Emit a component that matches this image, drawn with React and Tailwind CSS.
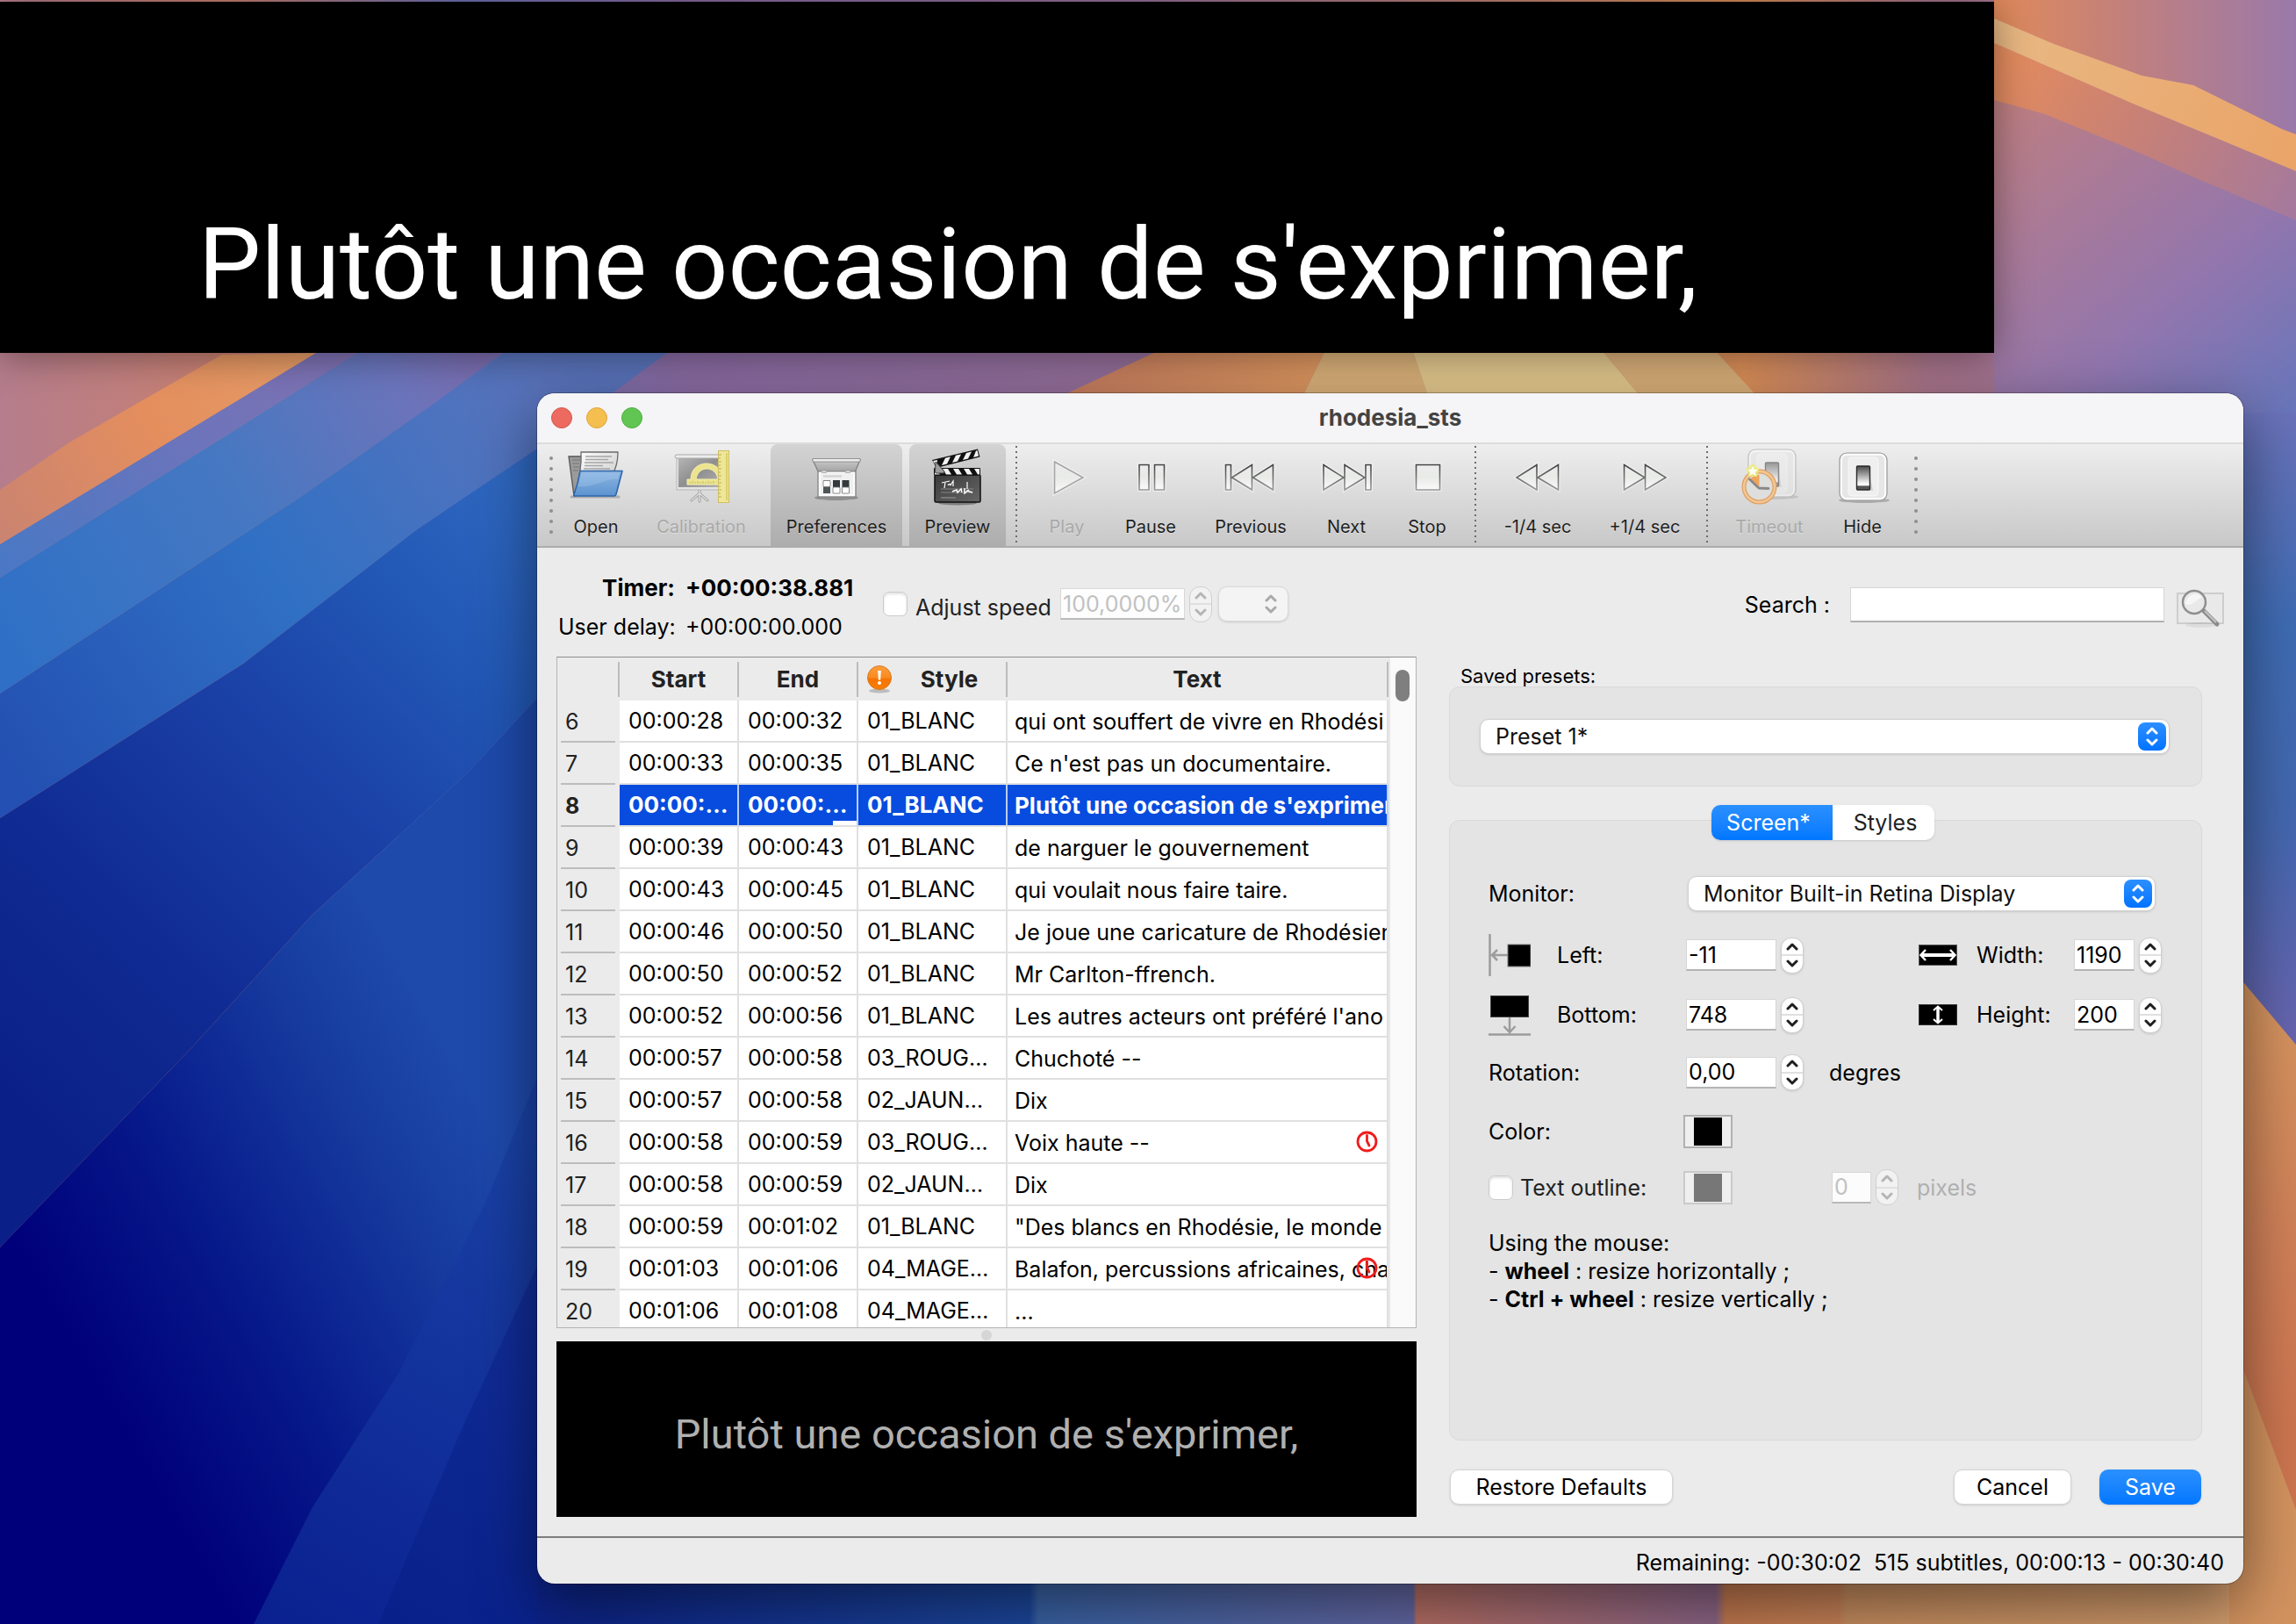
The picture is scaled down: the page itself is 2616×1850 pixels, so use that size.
import React from "react";

/* ---------- Desktop wallpaper ---------- */

function Wallpaper() {
  return (
    <svg
      className="absolute inset-0 h-full w-full"
      viewBox="0 0 2616 1850"
      preserveAspectRatio="none"
      aria-hidden="true"
    >
      <defs>
        <linearGradient id="wTop" x1="0" y1="0" x2="2616" y2="0" gradientUnits="userSpaceOnUse">
          <stop offset="0" stopColor="#b57d8c" />
          <stop offset="0.1" stopColor="#c98070" />
          <stop offset="0.2" stopColor="#6f72b6" />
          <stop offset="0.3" stopColor="#8b6ca4" />
          <stop offset="0.5" stopColor="#96709a" />
          <stop offset="0.76" stopColor="#dd9058" />
          <stop offset="0.84" stopColor="#a9758c" />
          <stop offset="1" stopColor="#9572ac" />
        </linearGradient>
        <linearGradient id="wGap" x1="1207" y1="0" x2="1510" y2="0" gradientUnits="userSpaceOnUse">
          <stop offset="0" stopColor="#c67c60" />
          <stop offset="1" stopColor="#df9860" />
        </linearGradient>
        <linearGradient id="wUpperRight" x1="2272" y1="60" x2="2616" y2="480" gradientUnits="userSpaceOnUse">
          <stop offset="0" stopColor="#c58078" />
          <stop offset="0.35" stopColor="#a97a98" />
          <stop offset="0.65" stopColor="#9176ae" />
          <stop offset="1" stopColor="#6676bc" />
        </linearGradient>
        <linearGradient id="wSkyRight" x1="2272" y1="0" x2="2616" y2="0" gradientUnits="userSpaceOnUse">
          <stop offset="0" stopColor="#e08a5a" />
          <stop offset="0.5" stopColor="#bd7f82" />
          <stop offset="1" stopColor="#9a79aa" />
        </linearGradient>
        <linearGradient id="wBeam" x1="2272" y1="20" x2="2616" y2="190" gradientUnits="userSpaceOnUse">
          <stop offset="0" stopColor="#e8b884" />
          <stop offset="1" stopColor="#eaa468" />
        </linearGradient>
        <linearGradient id="wBeam2" x1="2272" y1="60" x2="2616" y2="250" gradientUnits="userSpaceOnUse">
          <stop offset="0" stopColor="#e58c5c" />
          <stop offset="0.5" stopColor="#c58078" />
          <stop offset="1" stopColor="#a4799e" />
        </linearGradient>
        <linearGradient id="wOrange" x1="0" y1="600" x2="360" y2="400" gradientUnits="userSpaceOnUse">
          <stop offset="0" stopColor="#cb8470" />
          <stop offset="0.5" stopColor="#e48e5e" />
          <stop offset="1" stopColor="#e59c66" />
        </linearGradient>
        <linearGradient id="wViolet" x1="0" y1="640" x2="400" y2="400" gradientUnits="userSpaceOnUse">
          <stop offset="0" stopColor="#4a78c4" />
          <stop offset="0.6" stopColor="#6f74ba" />
          <stop offset="1" stopColor="#8070b0" />
        </linearGradient>
        <linearGradient id="wSky" x1="0" y1="720" x2="540" y2="400" gradientUnits="userSpaceOnUse">
          <stop offset="0" stopColor="#2f70c6" />
          <stop offset="0.5" stopColor="#4678c2" />
          <stop offset="0.85" stopColor="#6b74ba" />
          <stop offset="1" stopColor="#7a6cae" />
        </linearGradient>
        <linearGradient id="wBlue" x1="0" y1="860" x2="612" y2="440" gradientUnits="userSpaceOnUse">
          <stop offset="0" stopColor="#2350b2" />
          <stop offset="0.5" stopColor="#3070c4" />
          <stop offset="1" stopColor="#5a74bc" />
        </linearGradient>
        <linearGradient id="wDeep" x1="0" y1="1250" x2="640" y2="600" gradientUnits="userSpaceOnUse">
          <stop offset="0" stopColor="#0a2088" />
          <stop offset="0.25" stopColor="#0f2a92" />
          <stop offset="0.55" stopColor="#1a40a6" />
          <stop offset="0.8" stopColor="#2258b6" />
          <stop offset="1" stopColor="#2f68c0" />
        </linearGradient>
        <linearGradient id="wNavy" x1="120" y1="1600" x2="590" y2="1330" gradientUnits="userSpaceOnUse">
          <stop offset="0" stopColor="#00007a" />
          <stop offset="0.35" stopColor="#06188a" />
          <stop offset="0.75" stopColor="#163a9e" />
          <stop offset="1" stopColor="#1e4aac" />
        </linearGradient>
        <linearGradient id="wNavy2" x1="300" y1="1850" x2="612" y2="1300" gradientUnits="userSpaceOnUse">
          <stop offset="0" stopColor="#0a2090" />
          <stop offset="1" stopColor="#1a42a6" />
        </linearGradient>
        <linearGradient id="wNavy3" x1="430" y1="1850" x2="640" y2="1450" gradientUnits="userSpaceOnUse">
          <stop offset="0" stopColor="#08208a" />
          <stop offset="1" stopColor="#122e98" />
        </linearGradient>
        <linearGradient id="wBottom" x1="612" y1="0" x2="2616" y2="0" gradientUnits="userSpaceOnUse">
          <stop offset="0" stopColor="#0c2288" />
          <stop offset="0.28" stopColor="#1d489e" />
          <stop offset="0.285" stopColor="#3a64a8" />
          <stop offset="0.498" stopColor="#6468a4" />
          <stop offset="0.5" stopColor="#b87066" />
          <stop offset="0.67" stopColor="#8d6688" />
          <stop offset="0.676" stopColor="#c67b50" />
          <stop offset="0.74" stopColor="#c98358" />
          <stop offset="0.745" stopColor="#c98f60" />
          <stop offset="1" stopColor="#d6a070" />
        </linearGradient>
        <linearGradient id="wRight" x1="0" y1="448" x2="0" y2="1200" gradientUnits="userSpaceOnUse">
          <stop offset="0" stopColor="#6e73ba" />
          <stop offset="0.35" stopColor="#3f6cb4" />
          <stop offset="0.65" stopColor="#4468b0" />
          <stop offset="1" stopColor="#6a64ae" />
        </linearGradient>
        <linearGradient id="wRightLow" x1="0" y1="1120" x2="0" y2="1620" gradientUnits="userSpaceOnUse">
          <stop offset="0" stopColor="#d69660" />
          <stop offset="0.6" stopColor="#d08058" />
          <stop offset="1" stopColor="#cd7650" />
        </linearGradient>
      </defs>
      <rect width="2616" height="1850" fill="url(#wTop)" />
      <path d="M1330 395H1512L1480 460H1190Z" fill="url(#wGap)" />
      <path d="M1512 395H1608L1630 460H1480Z" fill="#dcb27a" />
      <path d="M1608 395H1822L1876 460H1630Z" fill="#e4c98e" />
      <path d="M1822 395H1950L2010 460H1876Z" fill="#dbb07a" />
      <path d="M0 620 360 402 407 402 0 658Z" fill="url(#wViolet)" />
      <path d="M0 558 79 504 253 404 360 402 0 620Z" fill="url(#wOrange)" />
      <path d="M0 658 407 402 573 402 494 460 344 565 0 790Z" fill="url(#wSky)" />
      <path d="M0 790 344 565 494 460 573 402H760L612 511 474 604 277 756 0 932Z" fill="url(#wBlue)" />
      <path d="M0 932 277 756 474 604 612 511H700V760L612 795 534 879 356 1042 217 1195 0 1421Z" fill="url(#wDeep)" />
      <path d="M0 1421 217 1195 356 1042 534 879 612 795H700V1850H0Z" fill="url(#wNavy)" />
      <path d="M660 1180 612 1228 554 1368 455 1563 356 1717 289 1850H660Z" fill="url(#wNavy2)" />
      <path d="M660 1400 612 1442 526 1628 431 1850H660Z" fill="url(#wNavy3)" />
      <rect x="612" y="1700" width="2004" height="150" fill="url(#wBottom)" />
      <path d="M2272 0H2616V480H2272Z" fill="url(#wUpperRight)" />
      <path d="M2272 0H2616V153L2499 97 2440 86 2340 50 2272 21Z" fill="url(#wSkyRight)" />
      <path d="M2272 49 2430 118 2616 195V251L2502 203 2440 175 2330 130 2272 114Z" fill="url(#wBeam2)" />
      <path d="M2272 21 2340 50 2440 86 2499 97 2600 147 2616 153V195L2430 118 2272 49Z" fill="url(#wBeam)" />
      <rect x="2500" y="470" width="116" height="740" fill="url(#wRight)" />
      <path d="M2540 1100 2616 1190V1850H2540Z" fill="url(#wRightLow)" />
      <path d="M2556 1560 2616 1720V1850H2540V1560Z" fill="#d3935f" />
    </svg>
  );
}

/* ---------- Toolbar icons ---------- */

function Icon({ children }) {
  return (
    <svg className="h-16 w-16 shrink-0 overflow-visible" viewBox="0 0 64 64" aria-hidden="true">
      <defs>
        <linearGradient id="glass" x1="0" y1="0" x2="0" y2="1">
          <stop offset="0" stopColor="#ececec" />
          <stop offset="0.5" stopColor="#e9ebe8" />
          <stop offset="1" stopColor="#fafafa" />
        </linearGradient>
        <linearGradient id="edge" x1="0" y1="0" x2="0" y2="1">
          <stop offset="0" stopColor="#444" />
          <stop offset="1" stopColor="#999" />
        </linearGradient>
        <linearGradient id="rocker" x1="0" y1="0" x2="0" y2="1">
          <stop offset="0" stopColor="#4a4a4a" />
          <stop offset="0.7" stopColor="#f2f2f2" />
          <stop offset="0.82" stopColor="#fff" />
          <stop offset="0.84" stopColor="#555" />
        </linearGradient>
      </defs>
      {children}
    </svg>
  );
}

const OpenIcon = () => (
  <Icon>
    <defs>
      <linearGradient id="folderBlue" x1="0" y1="0" x2="0" y2="1">
        <stop offset="0" stopColor="#8db6e2" />
        <stop offset="1" stopColor="#5c93cf" />
      </linearGradient>
      <linearGradient id="paper" x1="0" y1="0" x2="1" y2="1">
        <stop offset="0" stopColor="#fff" />
        <stop offset="1" stopColor="#c4c4c4" />
      </linearGradient>
    </defs>
    <path d="M4 58H58" stroke="#00000033" strokeWidth="3" strokeLinecap="round" />
    <path d="M1 12H18L12 56 7 57Z" fill="#9a9a9a" stroke="#555" strokeWidth="1.3" />
    <path d="M5 16H14M5 20H13M6 24H13M6 28H12" stroke="#777" />
    <path d="M15 7H57C57 17 55 26 50 34L8 55C13 38 16 24 15 7Z" fill="url(#paper)" stroke="#6b6b6b" strokeWidth="1.3" />
    <path d="M20 12H50M20 15.500H46M19 19H52M19 22.500H40M18 26H48" stroke="#a5a5a5" strokeWidth="1.4" />
    <path d="M14 28.500H62L55 55Q54.500 57 52.500 57H8Q6.500 57 7 55Q12 42 14 28.500Z" fill="url(#folderBlue)" stroke="#2f65ad" strokeWidth="1.6" strokeLinejoin="round" />
    <path d="M16 30.500H59L57 38C40 37 30 48 11 46Z" fill="#a9caee" opacity="0.35" />
  </Icon>
);

const CalibrationIcon = () => (
  <Icon>
    <defs>
      <linearGradient id="board" x1="0" y1="0" x2="1" y2="1">
        <stop offset="0" stopColor="#b4b4b4" />
        <stop offset="0.5" stopColor="#8f8f8f" />
        <stop offset="1" stopColor="#b0b0b0" />
      </linearGradient>
    </defs>
    <path d="M30 50V57M30 54 21 62M30 54 39 62M30 54V63" stroke="#999" strokeWidth="3" strokeLinecap="round" />
    <path d="M30 50V57M30 54 21 62M30 54 39 62M30 54V63" stroke="#dedede" strokeWidth="1.500" strokeLinecap="round" />
    <rect x="4" y="12" width="50" height="38" fill="#e4e4e4" stroke="#b5b5b5" />
    <rect x="6" y="14" width="46" height="33" fill="url(#board)" />
    <rect x="2" y="10" width="52" height="4" rx="2" fill="#ededed" stroke="#a9a9a9" />
    <path d="M16 44V38H20C20 14 56 14 56 38V44ZM26 38H51C49 22 28 22 26 38Z" fill="#ece38e" stroke="#f4efb0" strokeWidth="1" fillRule="evenodd" />
    <path d="M19 43V41M22 43V40M25 43V41M28 43V40M31 43V41M34 43V40M37 43V41M40 43V40M43 43V41M46 43V40" stroke="#b9ae58" strokeWidth="0.800" />
    <rect x="51.500" y="5.500" width="12" height="59" fill="#efe696" stroke="#cdbf66" />
    <path d="M61 8V62" stroke="#dccf70" strokeWidth="2" />
    <path d="M52 10H55M52 14H54M52 18H55M52 22H54M52 26H55M52 30H54M52 34H55M52 38H54M52 42H55M52 46H54M52 50H55M52 54H54M52 58H55" stroke="#b9ae58" />
  </Icon>
);

const PreferencesIcon = () => (
  <Icon>
    <defs>
      <linearGradient id="lid" x1="0" y1="0" x2="0" y2="1">
        <stop offset="0" stopColor="#c9c9c9" />
        <stop offset="1" stopColor="#a4a4a4" />
      </linearGradient>
    </defs>
    <ellipse cx="32" cy="59" rx="25" ry="3" fill="#00000040" />
    <rect x="11" y="28" width="43" height="30" fill="#f0f0f0" stroke="#858585" strokeWidth="1.300" />
    <rect x="13" y="30" width="39" height="26" fill="none" stroke="#fff" strokeWidth="1.400" />
    <path d="M5 15.500H59L53.500 29H11Z" fill="url(#lid)" stroke="#7d7d7d" strokeWidth="1.200" />
    <path d="M5 16.500H59" stroke="#ededed" strokeWidth="3" />
    <path d="M5 14.500H59V18H5Z" fill="none" stroke="#8a8a8a" strokeWidth="0.900" />
    <rect x="15" y="28" width="6" height="2.500" rx="1" fill="#ddd" stroke="#888" strokeWidth="0.600" />
    <rect x="42" y="28" width="6" height="2.500" rx="1" fill="#ddd" stroke="#888" strokeWidth="0.600" />
    <path d="M17 34.500H38" stroke="#cfcfcf" strokeWidth="2" />
    <rect x="17" y="39" width="8" height="15" fill="#4d5557" />
    <rect x="28" y="39" width="8" height="15" fill="#333a3c" />
    <rect x="38.500" y="39" width="8" height="15" fill="#333a3c" />
    <rect x="17" y="39.500" width="8" height="7" rx="1" fill="#fff" stroke="#777" strokeWidth="0.800" />
    <rect x="28" y="47" width="8" height="7" rx="1" fill="#fff" stroke="#777" strokeWidth="0.800" />
    <rect x="38.500" y="47" width="8" height="7" rx="1" fill="#fff" stroke="#777" strokeWidth="0.800" />
  </Icon>
);

const PreviewIcon = () => (
  <Icon>
    <defs>
      <linearGradient id="slate" x1="0" y1="0" x2="1" y2="1">
        <stop offset="0" stopColor="#3a3a3a" />
        <stop offset="1" stopColor="#666" />
      </linearGradient>
    </defs>
    <ellipse cx="32" cy="65" rx="22" ry="2.500" fill="#00000055" />
    <rect x="6" y="33" width="52" height="31" rx="1.500" fill="url(#slate)" stroke="#111" strokeWidth="1.500" />
    <rect x="5" y="25" width="53" height="8.500" rx="1" fill="#111" />
    <path d="M15 26H21L25 32.500H19ZM27 26H33L37 32.500H31ZM39 26H45L49 32.500H43ZM51 26H57V32.500H55ZM6 27 12 32.500H6Z" fill="#f2f2f2" />
    <path d="M3 16 55 3.500 57.500 12.500 8 25Z" fill="#111" />
    <path d="M4 17 9 16 8 23ZM18 13.700 24 12.300 20 20.500 14 22ZM30 10.800 36 9.400 32 17.500 26 19ZM42 8 48 6.500 44 14.500 38 16ZM53 5.500 54.500 5 56 11.500 50 13Z" fill="#f2f2f2" />
    <path d="M7 18 17 29Q18 31 15 31H8Q6 31 6.500 29Z" fill="#9c9c9c" stroke="#444" />
    <path d="M13 49H50M13 53H50" stroke="#8a8a8a" strokeWidth="0.900" />
    <path d="M13 59H30" stroke="#777" strokeWidth="2" />
    <path d="M14 42 23 40M18 41 17 48M21 45C24 40 23 48 25 43L27 40 27 46M43 41V49" stroke="#fff" strokeWidth="1.200" fill="none" />
    <path d="M26 52 31 50 32 53 36 49 37 53M40 48V54L45 50M42 51 49 53" stroke="#fff" strokeWidth="1.500" fill="none" />
  </Icon>
);

const Media = ({ d, faded }) => (
  <Icon>
    <path d={d} fill="none" stroke="#ffffff" strokeOpacity="0.500" strokeWidth="4" />
    <path
      d={d}
      fill="url(#glass)"
      stroke={faded ? "#a5a5a5" : "url(#edge)"}
      strokeWidth="1.600"
      strokeLinejoin="miter"
    />
  </Icon>
);

const Plate = ({ x, y }) => (
  <>
    <ellipse cx={x + 28} cy={y + 54} rx="29" ry="3" fill="#00000033" />
    <rect x={x} y={y} width="54" height="54" rx="8" fill="#f0f0f0" stroke="#9a9a9a" strokeWidth="1.200" />
    <rect x={x + 2} y={y + 2} width="50" height="50" rx="6" fill="#e6e6e6" stroke="#fff" strokeWidth="1.500" />
    <rect x={x + 10} y={y + 5} width="34" height="44" rx="4" fill="#efefef" stroke="#f8f8f8" />
    <path d={`M${x + 22} ${y + 42}L${x + 38} ${y + 43}L${x + 34} ${y + 24}Z`} fill="#00000022" />
    <rect x={x + 19.500} y={y + 15} width="15" height="27" rx="1" fill="url(#rocker)" stroke="#2b2b2b" strokeWidth="1.400" />
  </>
);

const TimeoutIcon = () => (
  <Icon>
    <g opacity="0.500">
      <Plate x={8} y={4} />
    </g>
    <circle cx="20.500" cy="46.500" r="17.500" fill="#dedfdc" stroke="#e0a063" strokeWidth="5" />
    <circle cx="20.500" cy="46.500" r="17.500" fill="none" stroke="#f2c795" strokeWidth="2.500" />
    <path d="M20.500 46.500V33A14 14 0 0 0 10 38Z" fill="#efa45c" />
    <path d="M9.500 38 20 48 31 48.500" fill="none" stroke="#888" strokeWidth="2.800" strokeLinejoin="round" strokeLinecap="round" />
    <circle cx="13" cy="28" r="7" fill="#f0ee80" opacity="0.600" />
    <path d="M13 21 15 26 20 26.500 16.500 30 17.500 35 13 32.500 8.500 35 9.500 30 6 26.500 11 26Z" fill="#fdfdf0" stroke="#ebe76c" />
  </Icon>
);

const HideIcon = () => (
  <Icon>
    <Plate x={6} y={8} />
  </Icon>
);

const PREV = "M3.500 21.500H9.500V50H3.500ZM10.500 36 33.500 21.500V50ZM34.500 36 57.500 21.500V50Z";
const NEXT = "M6 21.500 29 36 6 50ZM30 21.500 53 36 30 50ZM54 21.500H60V50H54Z";
const REW = "M8 36 31 21.500V50ZM32 36 55.500 21.500V50Z";
const FWD = "M8.500 21.500 32 36 8.500 50ZM32.500 21.500 56 36 32.500 50Z";

/* ---------- Toolbar ---------- */

function Tool({ icon, label, width, active, disabled }) {
  return (
    <button
      type="button"
      disabled={disabled}
      aria-pressed={active ? true : undefined}
      className={`flex h-full shrink-0 flex-col items-center pt-0.5 ${width} ${
        active ? "rounded-t-lg bg-linear-to-b from-[#d3d3d3] to-[#adadad]" : ""
      }`}
    >
      {icon}
      <span
        className={`mt-3.5 text-[20px] leading-7 ${
          disabled ? "text-[#a9a9a9]" : "text-[#1f1f1f]"
        } [text-shadow:0_1px_0_rgba(255,255,255,0.4)]`}
      >
        {label}
      </span>
    </button>
  );
}

const Grip = () => (
  <div className="flex h-full w-1 shrink-0 flex-col gap-2 pt-3.5" aria-hidden="true">
    {Array.from({ length: 8 }, (_, i) => (
      <span key={i} className="h-1 w-1 shrink-0 rounded-full bg-[#8f8f8f]" />
    ))}
  </div>
);

const Divider = () => (
  <div className="flex h-full w-3 shrink-0 flex-col gap-1 pt-0.5 pl-[3px]" aria-hidden="true">
    {Array.from({ length: 19 }, (_, i) => (
      <span key={i} className="h-0.5 w-0.5 shrink-0 bg-[#6d6d6d]" />
    ))}
  </div>
);

function Toolbar() {
  return (
    <div
      role="toolbar"
      className="flex h-[120px] shrink-0 gap-2 border-y-2 border-t-[#dcdcdc] border-b-[#acacac] bg-linear-to-b from-[#eeeeee] to-[#c8c8c8] pl-3.5"
    >
      <Grip />
      <Tool width="w-[82px]" label="Open" icon={<OpenIcon />} />
      <Tool width="w-[142px]" label="Calibration" icon={<CalibrationIcon />} disabled />
      <Tool width="w-[150px]" label="Preferences" icon={<PreferencesIcon />} active />
      <Tool width="w-[110px]" label="Preview" icon={<PreviewIcon />} active />
      <Divider />
      <Tool width="w-[83px]" label="Play" icon={<Media d="M17.500 18 50 36 17.500 54Z" faded />} disabled />
      <Tool width="w-[92px]" label="Pause" icon={<Media d="M19 21.500H30V50H19ZM36.500 21.500H47.500V50H36.500Z" />} />
      <Tool width="w-[120px]" label="Previous" icon={<Media d={PREV} />} />
      <Tool width="w-[82px]" label="Next" icon={<Media d={NEXT} />} />
      <Tool width="w-[86px]" label="Stop" icon={<Media d="M19.500 21.500H46.500V50H19.500Z" />} />
      <Divider />
      <Tool width="w-[110px]" label="-1/4 sec" icon={<Media d={REW} />} />
      <Tool width="w-[118px]" label="+1/4 sec" icon={<Media d={FWD} />} />
      <Divider />
      <Tool width="w-[110px]" label="Timeout" icon={<TimeoutIcon />} disabled />
      <Tool width="w-[86px]" label="Hide" icon={<HideIcon />} />
      <div className="pl-2">
        <Grip />
      </div>
    </div>
  );
}

/* ---------- Form controls ---------- */

const Chevron = ({ up }) => (
  <svg className="h-2.5 w-4" viewBox="0 0 16 10" fill="none" stroke="currentColor" strokeWidth="3" strokeLinecap="round" strokeLinejoin="round" aria-hidden="true">
    <path d={up ? "M3 8 8 3 13 8" : "M3 2 8 7 13 2"} />
  </svg>
);

function Spin({ id, value, width, disabled, label }) {
  const half = "flex min-h-0 flex-1 items-center justify-center";
  return (
    <div className="flex items-center gap-[5px]">
      <input
        id={id}
        type="text"
        aria-label={label}
        defaultValue={value}
        disabled={disabled}
        className={`h-9 border border-b-2 border-[#d6d6d6] border-b-[#b5b5b5] bg-white px-0.5 text-[25px] leading-8 ${width} ${
          disabled ? "text-[#bdbdbd] opacity-90" : "text-black"
        }`}
      />
      <div
        className={`flex h-[41px] w-[26px] shrink-0 flex-col overflow-hidden rounded-xl border border-[#cfcfcf] ${
          disabled ? "bg-[#f2f2f2] text-[#b5b5b5]" : "bg-white text-[#1f1f1f] shadow-sm"
        }`}
      >
        <button type="button" disabled={disabled} aria-label="Increase" className={`${half} border-b-2 border-[#e0e0e0]`}>
          <Chevron up />
        </button>
        <button type="button" disabled={disabled} aria-label="Decrease" className={half}>
          <Chevron />
        </button>
      </div>
    </div>
  );
}

function Picker({ label, value, width, muted }) {
  return (
    <div className={`relative ${width}`}>
      <select
        aria-label={label}
        disabled={muted}
        className={`block h-10 w-full appearance-none rounded-[10px] border pl-[17px] text-[25px] leading-9 shadow-sm ${
          muted ? "border-[#d9d9d9] bg-[#f4f4f4]" : "border-[#d0d0d0] bg-white text-[#111]"
        }`}
      >
        <option>{value}</option>
      </select>
      <span
        className={`pointer-events-none absolute top-1 right-1 flex h-8 w-8 flex-col items-center justify-center gap-1 rounded-lg ${
          muted ? "text-[#a9a9a9]" : "bg-linear-to-b from-[#2a8fff] to-[#0073ff] text-white"
        }`}
      >
        <Chevron up />
        <Chevron />
      </span>
    </div>
  );
}

const Check = ({ id }) => (
  <input
    id={id}
    type="checkbox"
    className="h-7 w-7 shrink-0 appearance-none rounded-[7px] border border-[#cbcbcb] bg-white shadow-[inset_0_2px_3px_rgba(0,0,0,0.12)]"
  />
);

const Swatch = ({ label, disabled }) => (
  <button
    type="button"
    aria-label={label}
    disabled={disabled}
    className={`-ml-1 flex h-[38px] w-14 items-center justify-center border-2 bg-[#efefef] ${
      disabled ? "border-[#cacaca]" : "border-[#b0b0b0]"
    }`}
  >
    <span className={`h-8 w-8 ${disabled ? "bg-[#777]" : "bg-black"}`} />
  </button>
);

/* ---------- Info row ---------- */

function InfoRow() {
  return (
    <div className="flex h-[124px] shrink-0 items-start pr-[22px] pl-6">
      <div className="grid w-[349px] grid-cols-[133px_1fr] gap-x-3 pt-6 leading-[44px]">
        <b className="text-right text-[26px] font-bold">Timer:</b>
        <b className="text-[26px] font-bold">+00:00:38.881</b>
        <span className="text-right whitespace-nowrap">User delay:</span>
        <span>+00:00:00.000</span>
      </div>
      <div className="flex items-center pt-[42px] pl-[21px]">
        <Check id="adjust" />
        <label htmlFor="adjust" className="ml-[9px] w-[165px] pt-2 text-[#222]">
          Adjust speed
        </label>
        <Spin label="Speed" value="100,0000%" width="w-[142px]" disabled />
        <div className="ml-[7px]">
          <Picker label="Rate" value="" width="w-20" muted />
        </div>
      </div>
      <div className="ml-auto flex items-center pt-[43px]">
        <label htmlFor="search" className="mr-[23px]">
          Search :
        </label>
        <input
          id="search"
          type="text"
          className="h-10 w-[358px] border border-b-2 border-[#d6d6d6] border-b-[#b0b0b0] bg-white px-2"
        />
        <button type="button" aria-label="Search" className="mt-2 ml-[14px] h-9 w-[54px] border-2 border-[#cdcdcd] bg-[#e9e9e9]">
          <svg className="-mt-1.5 ml-0.5 h-11 w-12 overflow-visible" viewBox="0 0 48 44" aria-hidden="true">
            <ellipse cx="24" cy="41" rx="18" ry="3" fill="#0000000f" />
            <path d="M26 24 42 40" stroke="#8b8b8b" strokeWidth="5" strokeLinecap="round" />
            <path d="M28 25 41 38" stroke="#c6c6c6" strokeWidth="2" />
            <circle cx="16" cy="15" r="13" fill="#e9e9e9" stroke="#8e8e8e" strokeWidth="2.500" />
            <path d="M6 17C8 4 22 3 25 10 18 11 14 21 6 17Z" fill="#fff" opacity="0.600" />
          </svg>
        </button>
      </div>
    </div>
  );
}

/* ---------- Subtitle table ---------- */

const ROWS = [
  { n: 6, start: "00:00:28", end: "00:00:32", style: "01_BLANC", text: "qui ont souffert de vivre en Rhodési" },
  { n: 7, start: "00:00:33", end: "00:00:35", style: "01_BLANC", text: "Ce n'est pas un documentaire." },
  { n: 8, start: "00:00:…", end: "00:00:…", style: "01_BLANC", text: "Plutôt une occasion de s'exprimer", selected: true },
  { n: 9, start: "00:00:39", end: "00:00:43", style: "01_BLANC", text: "de narguer le gouvernement" },
  { n: 10, start: "00:00:43", end: "00:00:45", style: "01_BLANC", text: "qui voulait nous faire taire." },
  { n: 11, start: "00:00:46", end: "00:00:50", style: "01_BLANC", text: "Je joue une caricature de Rhodésien" },
  { n: 12, start: "00:00:50", end: "00:00:52", style: "01_BLANC", text: "Mr Carlton-ffrench." },
  { n: 13, start: "00:00:52", end: "00:00:56", style: "01_BLANC", text: "Les autres acteurs ont préféré l'ano" },
  { n: 14, start: "00:00:57", end: "00:00:58", style: "03_ROUG…", text: "Chuchoté --" },
  { n: 15, start: "00:00:57", end: "00:00:58", style: "02_JAUN…", text: "Dix" },
  { n: 16, start: "00:00:58", end: "00:00:59", style: "03_ROUG…", text: "Voix haute --", late: true },
  { n: 17, start: "00:00:58", end: "00:00:59", style: "02_JAUN…", text: "Dix" },
  { n: 18, start: "00:00:59", end: "00:01:02", style: "01_BLANC", text: "\"Des blancs en Rhodésie, le monde" },
  { n: 19, start: "00:01:03", end: "00:01:06", style: "04_MAGE…", text: "Balafon, percussions africaines, cha", late: true },
  { n: 20, start: "00:01:06", end: "00:01:08", style: "04_MAGE…", text: "..." },
];

const LateMark = () => (
  <svg className="absolute top-2.5 right-[10px] h-[25px] w-[25px]" viewBox="0 0 25 25" fill="none" stroke="#f01c1c" strokeWidth="2.800" aria-hidden="true">
    <circle cx="12.500" cy="12.500" r="10.500" />
    <path d="M12.500 5.500V12L15 17" strokeLinecap="round" />
  </svg>
);

const WarnMark = () => (
  <svg className="ml-[9px] h-8 w-[30px] shrink-0" viewBox="0 0 30 32" aria-hidden="true">
    <defs>
      <linearGradient id="warn" x1="0" y1="0" x2="0" y2="1">
        <stop offset="0" stopColor="#fb9f3e" />
        <stop offset="0.500" stopColor="#f98a20" />
        <stop offset="0.550" stopColor="#f57400" />
        <stop offset="1" stopColor="#f97c08" />
      </linearGradient>
    </defs>
    <ellipse cx="15" cy="29" rx="12" ry="2.500" fill="#00000033" />
    <circle cx="15" cy="14" r="13.500" fill="url(#warn)" stroke="#d97a1e" strokeWidth="1" />
    <path d="M13.200 6H16.800L16.200 16.500H13.800Z" fill="#fff" />
    <circle cx="15" cy="20" r="2" fill="#fff" />
  </svg>
);

function HeadCell({ children }) {
  return (
    <th scope="col" className="h-[49px] p-0 align-middle font-bold text-[#222]">
      <div className="flex h-10 items-center border-r-2 border-[#bcbcbc] text-[26px]">
        {children}
      </div>
    </th>
  );
}

function SubtitleTable() {
  return (
    <div className="flex min-h-0 flex-1 overflow-hidden border border-[#b4b4b4] border-t-[#8e8e8e]">
      <div className="relative min-w-0 flex-1">
        <div className="absolute inset-0 overflow-hidden">
          <table className="w-full table-fixed border-collapse">
            <colgroup>
              <col className="w-[71px]" />
              <col className="w-[136px]" />
              <col className="w-[136px]" />
              <col className="w-[170px]" />
              <col />
            </colgroup>
            <thead>
              <tr>
                <HeadCell />
                <HeadCell><span className="flex-1">Start</span></HeadCell>
                <HeadCell><span className="flex-1">End</span></HeadCell>
                <HeadCell>
                  <WarnMark />
                  <span className="flex-1">Style</span>
                </HeadCell>
                <HeadCell><span className="flex-1">Text</span></HeadCell>
              </tr>
            </thead>
            <tbody>
              {ROWS.map((r) => {
                const cell = r.selected
                  ? "border-r-2 border-b-2 border-r-[#b9cdf6] border-b-[#e0e0e0] bg-[#074cde] text-[26px] font-bold text-white"
                  : "border-r-2 border-b-2 border-[#e0e0e0] bg-white text-black";
                return (
                  <tr key={r.n} className="h-12">
                    <th scope="row" className={`p-0 text-left ${r.selected ? "font-bold" : "font-normal"} text-[#222]`}>
                      <div className="ml-1 flex h-12 w-[62px] items-center border-b-2 border-[#bdbdbd] pt-0.5 pl-[5px]">{r.n}</div>
                    </th>
                    <td className="p-0">
                      <div className={`h-12 pl-2.5 leading-[46px] whitespace-nowrap ${cell}`}>{r.start}</div>
                    </td>
                    <td className="p-0">
                      <div className={`relative h-12 pl-2.5 leading-[46px] whitespace-nowrap ${cell}`}>
                        {r.end}
                        {r.selected && <span className="absolute right-0 bottom-0 h-[5px] w-[27px] bg-white" />}
                      </div>
                    </td>
                    <td className="p-0">
                      <div className={`h-12 pl-2.5 leading-[46px] whitespace-nowrap ${cell}`}>{r.style}</div>
                    </td>
                    <td className="p-0">
                      <div className={`relative h-12 overflow-hidden pl-2 leading-[48px] whitespace-nowrap ${cell}`}>
                        {r.text}
                        {r.late && <LateMark />}
                      </div>
                    </td>
                  </tr>
                );
              })}
            </tbody>
          </table>
        </div>
      </div>
      <div className="w-[31px] shrink-0 border-l-2 border-[#e8e8e8] bg-[#fafafa] pt-3.5 pl-1.5">
        <div className="h-9 w-4 rounded-full bg-[#7f7f7f]" />
      </div>
    </div>
  );
}

/* ---------- Settings ---------- */

const LeftIcon = () => (
  <svg className="h-12 w-12" viewBox="0 0 48 48" fill="none" aria-hidden="true">
    <path d="M1.500 0V48M4 24H22M10 18 4 24 10 30" stroke="#9c9c9c" strokeWidth="2.500" />
    <rect x="22" y="12" width="26" height="25" fill="#000" stroke="#777" strokeWidth="1" />
  </svg>
);

const BottomIcon = () => (
  <svg className="h-12 w-12" viewBox="0 0 48 48" fill="none" aria-hidden="true">
    <path d="M0 46.500H48M24 26V44M17.500 37 24 44 30.500 37" stroke="#9c9c9c" strokeWidth="2.500" />
    <rect x="2.500" y="2.500" width="43" height="24" fill="#000" stroke="#444" strokeWidth="1" />
  </svg>
);

const WidthIcon = () => (
  <svg className="h-6 w-11" viewBox="0 0 44 24" fill="none" aria-hidden="true">
    <rect x="0.500" y="0.500" width="43" height="23" fill="#000" stroke="#555" />
    <path d="M4 12H40" stroke="#fff" strokeWidth="4" />
    <path d="M8 6 2.500 12 8 18M36 6 41.500 12 36 18" stroke="#fff" strokeWidth="2.500" />
  </svg>
);

const HeightIcon = () => (
  <svg className="h-6 w-11" viewBox="0 0 44 24" fill="none" aria-hidden="true">
    <rect x="0.500" y="0.500" width="43" height="23" fill="#000" stroke="#333" />
    <path d="M22 3V21" stroke="#fff" strokeWidth="3.500" />
    <path d="M17 7 22 2.500 27 7M17 17 22 21.500 27 17" stroke="#fff" strokeWidth="2" />
  </svg>
);

function GeometryRow({ icon, id, label, value, icon2, id2, label2, value2 }) {
  return (
    <div className="flex h-12 items-center">
      {icon}
      <label htmlFor={id} className="ml-[30px] w-[147px]">{label}</label>
      <Spin id={id} value={value} width="w-[103px]" />
      <div className="ml-auto flex items-center">
        {icon2}
        <label htmlFor={id2} className="ml-[22px] w-[111px]">{label2}</label>
        <Spin id={id2} value={value2} width="w-[69px]" />
      </div>
    </div>
  );
}

function Settings() {
  return (
    <div className="flex w-[858px] shrink-0 flex-col">
      <div className="h-[34px] pt-1.5 pl-[13px] text-[22px] leading-8">Saved presets:</div>
      <div className="flex h-[114px] shrink-0 items-start rounded-xl border border-[#d9d9d9] bg-[#e4e4e4] pt-9 pr-[36px] pl-[34px]">
        <Picker label="Saved presets" value="Preset 1*" width="w-full" />
      </div>
      <div role="tablist" className="z-10 mt-[21px] mr-1.5 flex h-10 self-center overflow-hidden rounded-[10px] bg-white shadow">
        <button type="button" role="tab" aria-selected="true" className="w-[138px] bg-linear-to-b from-[#2a90ff] to-[#0077ff] pr-2 text-white">
          Screen*
        </button>
        <button type="button" role="tab" aria-selected="false" className="w-[116px] pl-1 text-[#222]">
          Styles
        </button>
      </div>
      <div className="-mt-[23px] flex min-h-0 flex-1 flex-col rounded-xl border border-[#d9d9d9] bg-[#e4e4e4] pt-[63px] pr-[45px] pl-11">
        <div className="mb-[26px] flex items-center pr-[7px]">
          <span className="w-[227px]">Monitor:</span>
          <Picker label="Monitor" value="Monitor Built-in Retina Display" width="min-w-0 flex-1" />
        </div>
        <div className="mb-5">
          <GeometryRow icon={<LeftIcon />} id="left" label="Left:" value="-11" icon2={<WidthIcon />} id2="width" label2="Width:" value2="1190" />
        </div>
        <div className="mb-[21px]">
          <GeometryRow icon={<BottomIcon />} id="bottom" label="Bottom:" value="748" icon2={<HeightIcon />} id2="height" label2="Height:" value2="200" />
        </div>
        <div className="mb-7 flex items-center">
          <label htmlFor="rotation" className="w-[225px]">Rotation:</label>
          <Spin id="rotation" value="0,00" width="w-[103px]" />
          <span className="ml-[29px]">degres</span>
        </div>
        <div className="mb-6 flex items-center">
          <span className="w-[226px]">Color:</span>
          <Swatch label="Text color" />
        </div>
        <div className="mb-6 flex items-center">
          <Check id="outline" />
          <label htmlFor="outline" className="ml-2 w-[190px] text-[#222]">Text outline:</label>
          <Swatch label="Outline color" disabled />
          <div className="ml-[113px]">
            <Spin label="Outline width" value="0" width="w-[45px]" disabled />
          </div>
          <span className="ml-[21px] text-[#b0b0b0]">pixels</span>
        </div>
        <p className="pt-[3px] leading-8">
          Using the mouse:
          <br />- <b>wheel</b> : resize horizontally ;
          <br />- <b>Ctrl + wheel</b> : resize vertically ;
        </p>
      </div>
      <div className="mt-[33px] mb-3.5 flex h-10 shrink-0 px-px">
        <button type="button" className="w-[254px] rounded-[10px] border border-[#d4d4d4] bg-white shadow-sm">
          Restore Defaults
        </button>
        <button type="button" className="mr-8 ml-auto w-[134px] rounded-[10px] border border-[#d4d4d4] bg-white shadow-sm">
          Cancel
        </button>
        <button type="button" className="w-[116px] rounded-[10px] bg-linear-to-b from-[#2a90ff] to-[#0077ff] text-white shadow-sm">
          Save
        </button>
      </div>
    </div>
  );
}

/* ---------- App ---------- */

export default function App() {
  return (
    <div className="relative flex min-h-screen w-full flex-col overflow-hidden font-['Inter','Liberation_Sans',sans-serif] text-[25px] leading-9 text-black">
      <Wallpaper />
      <div className="relative mt-0.5 mr-[344px] flex h-[400px] shrink-0 items-end bg-black pb-7 pl-[226px] font-['Roboto','Inter',sans-serif] text-[113px] leading-[144px] whitespace-nowrap text-white shadow-[0_4px_40px_rgba(0,0,0,0.4)]">
        Plutôt une occasion de s'exprimer,
      </div>
      <main className="relative mt-[46px] mr-[60px] mb-[46px] ml-[612px] flex flex-1 flex-col overflow-hidden rounded-[20px] bg-[#ebebeb] shadow-[0_0_0_1px_rgba(0,0,0,0.25),0_24px_70px_rgba(0,0,0,0.5)]">
        <header className="relative flex h-14 shrink-0 items-center justify-center bg-[#f5f4f6]">
          <div className="absolute left-4 flex gap-4">
            <button type="button" aria-label="Close" className="h-6 w-6 rounded-full border border-[#d7564c] bg-[#ec6a5f]" />
            <button type="button" aria-label="Minimise" className="h-6 w-6 rounded-full border border-[#dca43c] bg-[#f5bf4f]" />
            <button type="button" aria-label="Zoom" className="h-6 w-6 rounded-full border border-[#4cae40] bg-[#61c554]" />
          </div>
          <h1 className="text-[26px] font-bold text-[#434343]">rhodesia_sts</h1>
        </header>
        <Toolbar />
        <InfoRow />
        <div className="flex min-h-0 flex-1 gap-[37px] pr-[47px] pb-[22px] pl-[22px]">
          <section className="flex min-w-0 flex-1 flex-col">
            <SubtitleTable />
            <div className="flex h-[15px] shrink-0 items-center justify-center">
              <span className="h-3 w-3 rounded-full bg-[#d6d6d6]" />
            </div>
            <div className="flex h-[200px] shrink-0 items-center justify-center bg-black pt-3 font-['Roboto','Inter',sans-serif] text-[47px] leading-[60px] whitespace-nowrap text-[#b0b0b0]">
              Plutôt une occasion de s'exprimer,
            </div>
          </section>
          <Settings />
        </div>
        <footer className="flex h-[54px] shrink-0 items-center justify-end gap-3.5 border-t-2 border-[#7d7d7d] pt-1 pr-[22px]">
          <span>Remaining: -00:30:02</span>
          <span>515 subtitles, 00:00:13 - 00:30:40</span>
        </footer>
      </main>
    </div>
  );
}
